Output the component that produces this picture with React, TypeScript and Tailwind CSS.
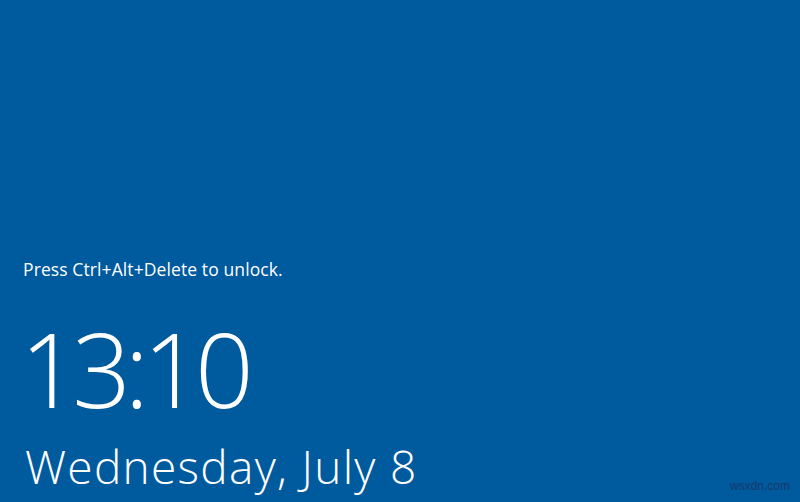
export default function App() {
  return (
    <div className="relative w-[800px] h-[502px] overflow-hidden bg-[#005a9e] text-white font-['Open_Sans',sans-serif]">
      <div className="flex flex-col pt-[256px] pl-[23px]">
        <p className="text-[17.5px] leading-[26px] tracking-[0.1px]">Press Ctrl+Alt+Delete to unlock.</p>
        <div className="mt-[36px] -ml-[3px] text-[103px] leading-[100px] font-light tracking-[-6.5px]">13:10</div>
        <div className="mt-[20px] pl-[2px] text-[46px] leading-[56px] font-light tracking-[1.3px]">Wednesday, July 8</div>
      </div>
      <span className="absolute right-[10px] bottom-[7px] text-[12px] text-[#1a3868] font-['Liberation_Sans',sans-serif]">wsxdn.com</span>
    </div>
  )
}
